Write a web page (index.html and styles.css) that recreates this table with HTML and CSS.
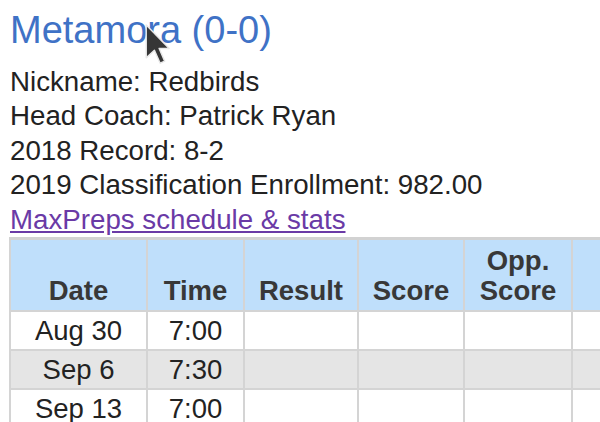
FILE: index.html
```html
<!DOCTYPE html>
<html>
<head>
<meta charset="utf-8">
<link rel="stylesheet" href="styles.css">
</head>
<body>
<div class="page">
  <h2 class="team-title">Metamora (0-0)</h2>
  <div class="info">Nickname: Redbirds</div>
  <div class="info">Head Coach: Patrick Ryan</div>
  <div class="info">2018 Record: 8-2</div>
  <div class="info">2019 Classification Enrollment: 982.00</div>
  <div class="info"><a class="link" href="#">MaxPreps schedule &amp; stats</a></div>
  <table class="schedule">
    <colgroup>
      <col class="c-date">
      <col class="c-time">
      <col class="c-result">
      <col class="c-score">
      <col class="c-opp">
      <col class="c-more">
    </colgroup>
    <thead>
      <tr>
        <th>Date</th>
        <th>Time</th>
        <th>Result</th>
        <th>Score</th>
        <th>Opp.<br>Score</th>
        <th></th>
      </tr>
    </thead>
    <tbody>
      <tr><td>Aug 30</td><td>7:00</td><td></td><td></td><td></td><td></td></tr>
      <tr class="alt"><td>Sep 6</td><td>7:30</td><td></td><td></td><td></td><td></td></tr>
      <tr><td>Sep 13</td><td>7:00</td><td></td><td></td><td></td><td></td></tr>
    </tbody>
  </table>
</div>
<svg class="cursor" width="27" height="41" viewBox="-1 -1 13 20">
  <path d="M0 0 L0 16 L4 12.3 L6.8 18.6 L9 17.6 L6.3 11.4 L11.2 11.4 Z" fill="#363636" stroke="#e8e8e8" stroke-width="0.7" stroke-linejoin="round"/>
</svg>
</body>
</html>
```

FILE: styles.css
```css
html, body {
  margin: 0;
  padding: 0;
  background: #ffffff;
  overflow: hidden;
}
body {
  font-family: "Liberation Sans", Arial, sans-serif;
  color: #222222;
  position: relative;
  width: 600px;
  height: 422px;
}
.page {
  padding: 9px 0 0 10px;
}
.team-title {
  margin: 0 0 13px 0;
  font-size: 38px;
  font-weight: normal;
  color: #3f72c6;
  line-height: normal;
}
.info {
  font-size: 27.7px;
  line-height: 34.4px;
  white-space: nowrap;
}
.link {
  color: #6a3aa6;
  text-decoration: underline;
}
.schedule {
  margin-top: 0;
  margin-left: -1px;
  border-collapse: collapse;
  table-layout: fixed;
  width: 700px;
  font-size: 27.5px;
  border-top: 3px solid #d2d2d2;
}
.c-date { width: 137px; }
.c-time { width: 97px; }
.c-result { width: 114px; }
.c-score { width: 106px; }
.c-opp { width: 108px; }
.c-more { width: 138px; }
.schedule th,
.schedule td {
  border: 2px solid #d4d4d4;
  text-align: center;
  padding: 0;
}
.schedule th {
  background: #bfdffb;
  color: #383838;
  font-weight: bold;
  vertical-align: bottom;
  height: 66px;
  line-height: 30px;
  padding-bottom: 4px;
}
.schedule td {
  height: 37px;
  line-height: 37px;
  color: #222222;
}
.schedule tr.alt td {
  background: #e5e5e5;
}
.cursor {
  position: absolute;
  left: 144px;
  top: 23px;
}
```
